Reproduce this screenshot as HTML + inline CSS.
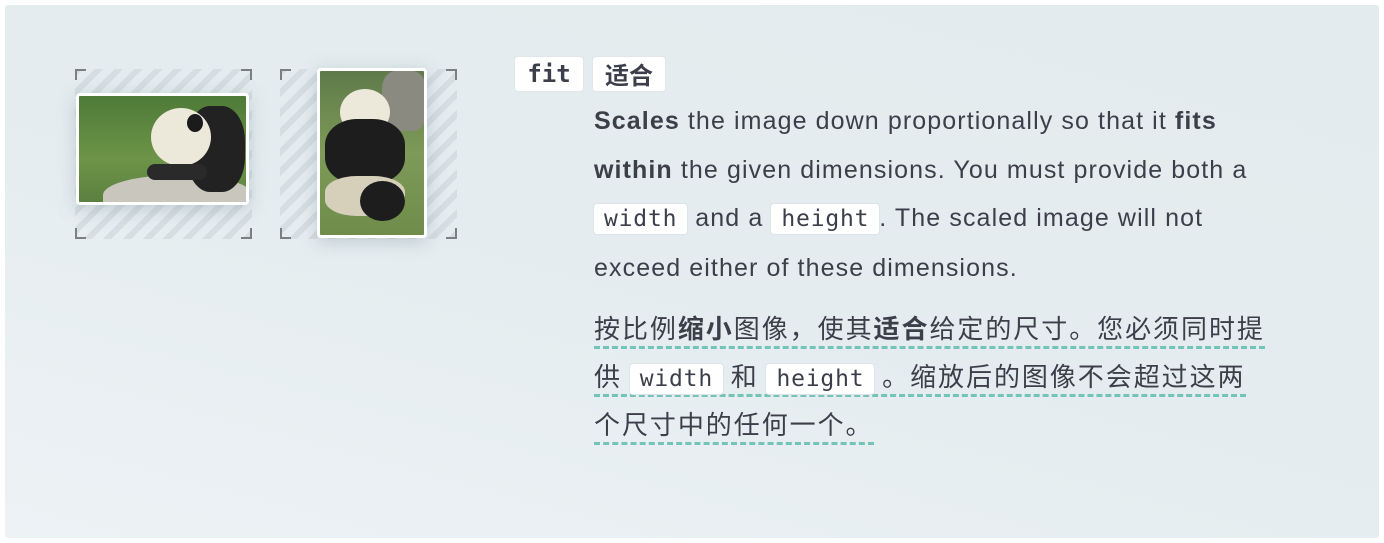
<!DOCTYPE html>
<html><head><meta charset="utf-8"><style>
body{margin:0;width:1384px;height:543px;background:#fff;overflow:hidden;font-family:"Liberation Sans","Noto Sans CJK SC",sans-serif;color:#3c3f4a}
.panel{position:absolute;left:5px;top:5px;width:1374px;height:533px;background:linear-gradient(15deg,#edf2f5 0%,#e4ecef 50%,#e3ebee 100%);border-radius:3px}
.frame{position:absolute;top:69px;width:177px;height:170px;background:repeating-linear-gradient(135deg,rgba(200,210,214,.55) 0 6px,transparent 6px 14px)}
.c{position:absolute;width:9px;height:9px;border-color:#7a7f84;border-style:solid;border-width:0}
.tl{left:0;top:0;border-left-width:2px;border-top-width:2px}
.tr{right:0;top:0;border-right-width:2px;border-top-width:2px}
.bl{left:0;bottom:0;border-left-width:2px;border-bottom-width:2px}
.br{right:0;bottom:0;border-right-width:2px;border-bottom-width:2px}
.img{position:absolute;background:#fff;border-radius:4px;padding:3px;box-shadow:0 4px 18px rgba(120,140,150,.35)}
.img>div{width:100%;height:100%;border-radius:1px;position:relative;overflow:hidden}
.tag{position:absolute;background:#fff;border-radius:3px;font-size:24px;font-weight:bold;height:34px;line-height:34px;text-align:center;box-shadow:0 0 0 1px #e0e6e9}
.mono{font-family:"DejaVu Sans Mono","Liberation Mono",monospace}
.p{position:absolute;left:594px;width:685px;font-size:25px;letter-spacing:1.1px;line-height:48.5px;color:#3c3f4a}
code{font-family:"DejaVu Sans Mono","Liberation Mono",monospace;font-size:23px;letter-spacing:0.8px;background:#fff;border-radius:3px;padding:2px 10px;box-shadow:0 0 0 1px #dde4e7}
.zh{position:absolute;left:594px;top:304px;width:720px;white-space:nowrap;font-size:26px;letter-spacing:1.95px;line-height:48px;font-family:"Noto Sans CJK SC",sans-serif}
.zh span.u{border-bottom:3px dashed #75c2b9;padding-bottom:0}
.zh code{line-height:1;letter-spacing:0.8px}
b{font-weight:bold}
</style></head><body>
<div class="panel"></div>
<div class="frame" style="left:75px"><i class="c tl"></i><i class="c tr"></i><i class="c bl"></i><i class="c br"></i></div>
<div class="frame" style="left:280px"><i class="c tl"></i><i class="c tr"></i><i class="c bl"></i><i class="c br"></i></div>
<div class="img" style="left:76px;top:93px;width:167px;height:106px"><div style="background:linear-gradient(180deg,#4e7a38,#6d9448 60%,#5b8040)">
<div style="position:absolute;left:24px;top:79px;width:150px;height:40px;border-radius:50% 50% 0 0;background:#c9c6bd"></div>
<div style="position:absolute;left:108px;top:10px;width:58px;height:86px;border-radius:40%;background:#222"></div>
<div style="position:absolute;left:72px;top:12px;width:60px;height:58px;border-radius:50%;background:#ece8da"></div>
<div style="position:absolute;left:108px;top:18px;width:16px;height:18px;border-radius:50%;background:#1b1b1b"></div>
<div style="position:absolute;left:68px;top:68px;width:60px;height:16px;border-radius:8px;background:#2a2a2a"></div>
</div></div>
<div class="img" style="left:317px;top:68px;width:104px;height:164px"><div style="background:linear-gradient(180deg,#5f7a4a,#7e9a58 50%,#6f8c4a)">
<div style="position:absolute;left:62px;top:0;width:44px;height:60px;background:#8b8a80;border-radius:30%"></div>
<div style="position:absolute;left:20px;top:18px;width:50px;height:46px;border-radius:50%;background:#ece8da"></div>
<div style="position:absolute;left:5px;top:48px;width:80px;height:65px;border-radius:40%;background:#1d1d1d"></div>
<div style="position:absolute;left:5px;top:105px;width:80px;height:40px;border-radius:40%;background:#d6d0bb"></div>
<div style="position:absolute;left:40px;top:110px;width:45px;height:40px;border-radius:50%;background:#1d1d1d"></div>
</div></div>
<div class="tag mono" style="left:515px;top:57px;width:68px">fit</div>
<div class="tag" style="left:593px;top:57px;width:72px;font-family:'Noto Sans CJK SC',sans-serif">适合</div>
<div class="p" style="top:97px"><b>Scales</b> the image down proportionally so that it <b>fits within</b> the given dimensions. You must provide both a <code>width</code> and a <code>height</code>. The scaled image will not exceed either of these dimensions.</div>
<div class="zh"><span class="u">按比例<b>缩小</b>图像，使其<b>适合</b>给定的尺寸。您必须同时提</span><br><span class="u">供 <code>width</code> 和 <code>height</code> 。缩放后的图像不会超过这两</span><br><span class="u">个尺寸中的任何一个。</span></div>
</body></html>
